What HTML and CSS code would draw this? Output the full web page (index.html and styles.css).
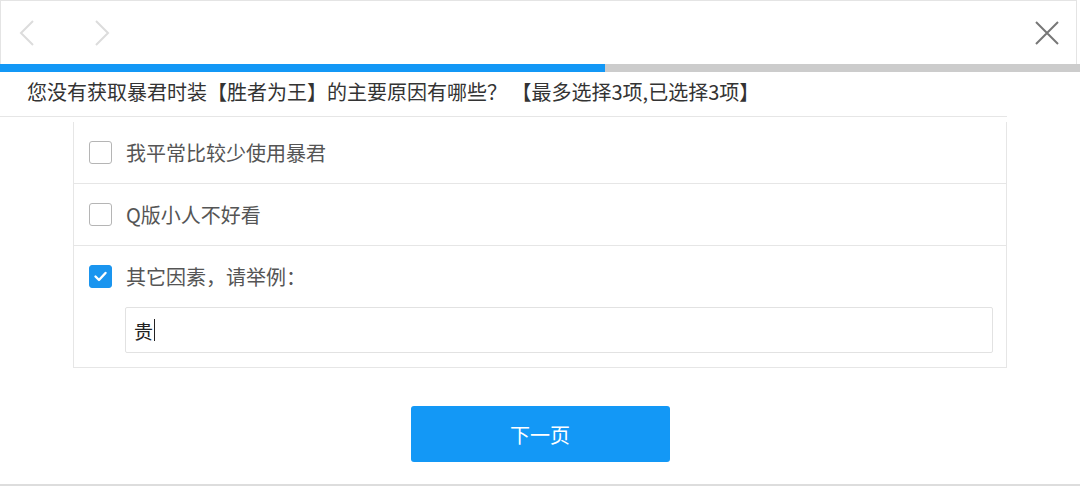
FILE: index.html
```html
<!DOCTYPE html>
<html>
<head>
	<title>问卷</title>
	<link rel="stylesheet" href="styles.css">
</head>
<body>
	<div class="page">
		<div class="topbar">
			<div class="nav">
				<svg class="nav-icon" width="20" height="30" viewBox="0 0 20 30"><polyline points="16,3 4,15 16,27" fill="none" stroke="#dcdcdc" stroke-width="2"/></svg>
				<svg class="nav-icon next" width="20" height="30" viewBox="0 0 20 30"><polyline points="4,3 16,15 4,27" fill="none" stroke="#dcdcdc" stroke-width="2"/></svg>
			</div>
			<svg class="close-icon" width="24" height="24" viewBox="0 0 24 24"><path d="M1 1 L23 23 M23 1 L1 23" stroke="#777" stroke-width="2"/></svg>
		</div>
		<div class="progress">
			<div class="progress-fill"></div>
		</div>
		<div class="question">您没有获取暴君时装【胜者为王】的主要原因有哪些？ 【最多选择3项,已选择3项】</div>
		<div class="options">
			<div class="option">
				<span class="checkbox"></span>
				<span class="label">我平常比较少使用暴君</span>
			</div>
			<div class="option">
				<span class="checkbox"></span>
				<span class="label">Q版小人不好看</span>
			</div>
			<div class="option option-other">
				<div class="option-head">
					<span class="checkbox checked">
						<svg width="15" height="15" viewBox="0 0 15 15"><polyline points="2.5,7.5 6,11 12.5,4" fill="none" stroke="#fff" stroke-width="2.4" stroke-linecap="round" stroke-linejoin="round"/></svg>
					</span>
					<span class="label">其它因素，请举例：</span>
				</div>
				<div class="other-input">贵<span class="caret"></span></div>
			</div>
		</div>
		<div class="actions">
			<button class="next-btn">下一页</button>
		</div>
	</div>
</body>
</html>
```

FILE: styles.css
```css
:root {
  --blue: #1398f6;
  --line: #e6e6e6;
  --text: #333333;
  --muted: #555555;
}

body {
  margin: 0;
  background: #ffffff;
  font-family: "Noto Sans CJK SC", "Noto Sans", sans-serif;
}

.page {
  width: 1080px;
  height: 486px;
  overflow: hidden;
  border-bottom: 2px solid #dddddd;
  box-sizing: border-box;
}

.topbar {
  width: 1077px;
  height: 64px;
  box-sizing: border-box;
  border: 1px solid #e4e4e4;
  border-bottom: none;
  display: flex;
  align-items: center;
  justify-content: space-between;
  padding: 0 17px 0 16px;
}

.nav {
  display: flex;
  align-items: center;
  gap: 55px;
}

.close-icon {
  margin-top: 1px;
}

.progress {
  height: 8px;
  background: #cccccc;
}

.progress-fill {
  width: 605px;
  height: 100%;
  background: var(--blue);
}

.question {
  width: 1007px;
  height: 45px;
  box-sizing: border-box;
  padding-left: 27px;
  line-height: 39px;
  font-size: 20px;
  color: var(--text);
  border-bottom: 1px solid var(--line);
  white-space: nowrap;
}

.options {
  margin-left: 73px;
  width: 934px;
  box-sizing: border-box;
  border: 1px solid var(--line);
  border-top: none;
  margin-top: 5px;
}

.option {
  height: 62px;
  box-sizing: border-box;
  border-bottom: 1px solid var(--line);
  display: flex;
  align-items: center;
  padding-left: 15px;
}

.option-other {
  display: block;
  height: auto;
  border-bottom: none;
  padding: 16px 13px 14px 15px;
}

.option-head {
  display: flex;
  align-items: center;
}

.checkbox {
  width: 23px;
  height: 23px;
  box-sizing: border-box;
  border: 1px solid #b5b5b5;
  border-radius: 3px;
  flex-shrink: 0;
  display: flex;
  align-items: center;
  justify-content: center;
}

.checkbox.checked {
  background: #1a95ef;
  border-color: #1a95ef;
}

.label {
  margin-left: 14px;
  font-size: 20px;
  color: var(--muted);
}

.other-input {
  margin: 16px 0 0 36px;
  height: 46px;
  box-sizing: border-box;
  border: 1px solid #e2e2e2;
  border-radius: 2px;
  padding-left: 8px;
  display: flex;
  align-items: center;
  font-size: 19px;
  color: #222222;
}

.caret {
  display: inline-block;
  width: 1px;
  height: 22px;
  background: #222222;
  margin-left: 1px;
}

.actions {
  display: flex;
  justify-content: center;
  padding-top: 38px;
}

.next-btn {
  width: 259px;
  height: 56px;
  background: var(--blue);
  color: #ffffff;
  border: none;
  border-radius: 3px;
  font-family: "Noto Sans CJK SC", sans-serif;
  font-size: 20px;
  cursor: pointer;
}
```
